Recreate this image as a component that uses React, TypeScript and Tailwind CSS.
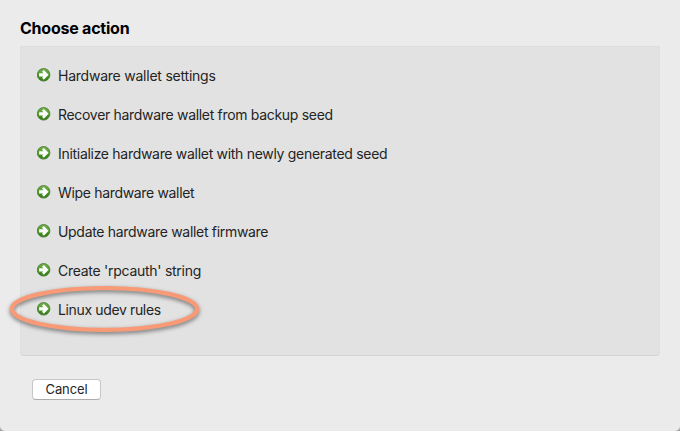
const actions = [
  { label: 'Hardware wallet settings', spacing: 'tracking-[-0.23px]' },
  { label: 'Recover hardware wallet from backup seed', spacing: 'tracking-[-0.31px]' },
  { label: 'Initialize hardware wallet with newly generated seed', spacing: 'tracking-[-0.3px]' },
  { label: 'Wipe hardware wallet', spacing: 'tracking-[-0.33px]' },
  { label: 'Update hardware wallet firmware', spacing: 'tracking-[-0.31px]' },
  { label: "Create 'rpcauth' string", spacing: 'tracking-[-0.27px]' },
  { label: 'Linux udev rules', spacing: 'tracking-[-0.36px]', highlighted: true },
];

function ArrowIcon() {
  return (
    <svg className="mb-px size-[14px] shrink-0" viewBox="0 0 14 14" aria-hidden="true">
      <defs>
        <linearGradient id="arrow-green" x1="0" y1="0" x2="0" y2="1">
          <stop offset="0" stopColor="#78b154" />
          <stop offset="0.5" stopColor="#50992a" />
          <stop offset="1" stopColor="#2f7a14" />
        </linearGradient>
      </defs>
      <circle cx="6.6" cy="6.8" r="6.3" fill="url(#arrow-green)" stroke="#4d8038" strokeWidth="0.9" />
      <path d="M2.1 5.2h4.3L5 3.8 6.8 1.9 11.6 6.8l-4.8 4.9L5 9.8l1.4-1.4H2.1z" fill="#fff" />
    </svg>
  );
}

function HighlightRing() {
  return (
    <svg
      className="pointer-events-none absolute -left-[32px] -top-[10px] h-[60px] w-[200px]"
      viewBox="0 0 200 60"
      aria-hidden="true"
    >
      <ellipse
        cx="99.5" cy="28.9" rx="92.6" ry="20.9" fill="none" stroke="#f99a76" strokeWidth="4.2"
        className="drop-shadow-[0_2px_2px_rgba(0,0,0,0.5)]"
      />
    </svg>
  );
}

export default function App() {
  return (
    <div className="h-[431px] w-[680px] overflow-hidden bg-[#a5a5a5] font-[Inter,sans-serif]">
      <main className="flex h-full flex-col items-start rounded-b-[5px] bg-[#ebebeb] px-5 pt-[18px]">
        <h1 className="h-[28px] text-[16px] font-bold leading-[21px] tracking-[-0.23px] text-black">
          Choose action
        </h1>
        <section className="h-[310px] w-full rounded-b-[4px] rounded-t-[1px] border border-[#dedede] border-b-[#d2d2d2] bg-[#e2e2e2] pl-4 pt-[9px]">
          <ul>
            {actions.map(({ label, spacing, highlighted }) => (
              <li key={label} className="relative flex h-[39px] items-center gap-[7px]">
                <ArrowIcon />
                <span className={`text-[14px] leading-5 text-[#242424] ${spacing}`}>{label}</span>
                {highlighted && <HighlightRing />}
              </li>
            ))}
          </ul>
        </section>
        <button className="ml-3 mt-[23px] h-[21px] w-[69px] rounded-[4px] border border-[#c7c7c7] border-b-[#acacac] bg-white text-[13px] leading-[19px] tracking-[-0.1px] text-[#262626]">
          Cancel
        </button>
      </main>
    </div>
  );
}
